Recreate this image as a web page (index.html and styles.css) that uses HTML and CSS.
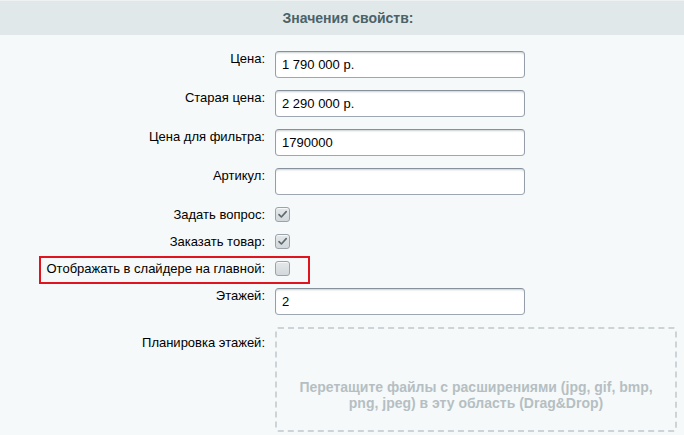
FILE: index.html
```html
<!DOCTYPE html>
<html lang="ru">
<head>
<meta charset="utf-8">
<link rel="stylesheet" href="styles.css">
</head>
<body>
<div class="header">Значения свойств:</div>
<div class="form">
  <div class="row">
    <div class="label">Цена:</div>
    <div class="field"><input class="text" type="text" value="1 790 000 р."></div>
  </div>
  <div class="row">
    <div class="label">Старая цена:</div>
    <div class="field"><input class="text" type="text" value="2 290 000 р."></div>
  </div>
  <div class="row">
    <div class="label">Цена для фильтра:</div>
    <div class="field"><input class="text" type="text" value="1790000"></div>
  </div>
  <div class="row">
    <div class="label">Артикул:</div>
    <div class="field"><input class="text" type="text" value=""></div>
  </div>
  <div class="row row-check">
    <div class="label">Задать вопрос:</div>
    <div class="field"><span class="check checked"><svg viewBox="0 0 15 15" width="15" height="15"><path d="M4 7.6 L6.4 10 L11.2 4.6" fill="none" stroke="#5f686e" stroke-width="1.6" stroke-linecap="round" stroke-linejoin="round"/></svg></span></div>
  </div>
  <div class="row row-check">
    <div class="label">Заказать товар:</div>
    <div class="field"><span class="check checked"><svg viewBox="0 0 15 15" width="15" height="15"><path d="M4 7.6 L6.4 10 L11.2 4.6" fill="none" stroke="#5f686e" stroke-width="1.6" stroke-linecap="round" stroke-linejoin="round"/></svg></span></div>
  </div>
  <div class="row row-check row-marked">
    <div class="label">Отображать в слайдере на главной:</div>
    <div class="field"><span class="check"></span></div>
    <div class="highlight"></div>
  </div>
  <div class="row">
    <div class="label">Этажей:</div>
    <div class="field"><input class="text" type="text" value="2"></div>
  </div>
  <div class="row">
    <div class="label label-drop">Планировка этажей:</div>
    <div class="field">
      <div class="dropzone">Перетащите файлы с расширениями (jpg, gif, bmp, png, jpeg) в эту область (Drag&amp;Drop)</div>
    </div>
  </div>
</div>
</body>
</html>
```

FILE: styles.css
```css
html, body {
  margin: 0;
  padding: 0;
}
body {
  width: 684px;
  height: 435px;
  overflow: hidden;
  background: #f5f9f9;
  font-family: "Liberation Sans", Arial, sans-serif;
  font-size: 13px;
  color: #000;
}
.header {
  height: 34px;
  border-top: 1px solid #eef2f3;
  background: #e0e8ea;
  color: #4b6267;
  font-weight: bold;
  font-size: 14px;
  line-height: 34px;
  text-align: center;
  padding-left: 12px;
}
.form {
  display: flex;
  flex-direction: column;
  gap: 12px;
  padding-top: 16px;
}
.row {
  display: flex;
  align-items: flex-start;
  gap: 10px;
  position: relative;
}
.row-check {
  align-items: center;
}
.label {
  width: 265px;
  flex: none;
  text-align: right;
  line-height: 15px;
}
.label-drop {
  padding-top: 8px;
}
.field {
  display: flex;
}
.text {
  box-sizing: border-box;
  width: 250px;
  height: 27px;
  margin: 0;
  padding: 0 6px;
  border: 1px solid;
  border-color: #87919c #959ea9 #9ea7b1 #959ea9;
  border-radius: 4px;
  background: #fff;
  box-shadow: inset 0 2px 2px -1px rgba(180, 188, 191, 0.7);
  font-family: "Liberation Sans", Arial, sans-serif;
  font-size: 13px;
  color: #000;
  outline: none;
}
.check {
  box-sizing: border-box;
  display: block;
  width: 15px;
  height: 15px;
  border: 1px solid #9aa3aa;
  border-radius: 3px;
  background: linear-gradient(#e4e8ea, #d2d8db);
  box-shadow: inset 0 1px 0 rgba(255, 255, 255, 0.7);
}
.check svg {
  display: block;
  margin: -1px 0 0 -1px;
}
.highlight {
  position: absolute;
  left: 39px;
  top: -5px;
  width: 271px;
  height: 28px;
  box-sizing: border-box;
  border: 2px solid #e0141e;
  pointer-events: none;
}
.dropzone {
  box-sizing: border-box;
  width: 402px;
  height: 105px;
  border: 2px dashed #cdd4d7;
  border-radius: 3px;
  padding: 50px 12px 0;
  text-align: center;
  font-weight: bold;
  font-size: 14px;
  line-height: 16px;
  color: #b5bfc3;
}
```
